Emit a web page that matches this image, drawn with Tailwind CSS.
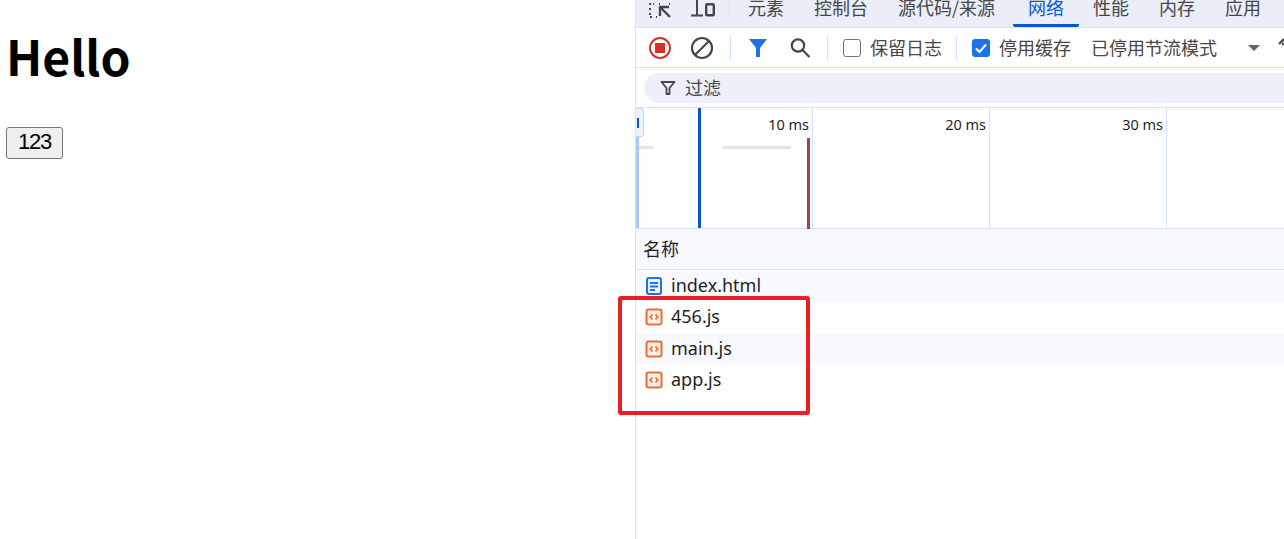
<!DOCTYPE html>
<html lang="en">
<head>
    <meta charset="UTF-8">
    <title>Hello</title>
    <script src="https://cdn.jsdelivr.net/npm/@tailwindcss/browser@4"></script>
</head>
<body class="bg-white overflow-hidden">
<div class="relative flex w-[1284px] h-[539px] overflow-hidden font-['Noto_Sans','Noto_Sans_CJK_SC',sans-serif]">

    <!-- page -->
    <div class="w-[635px] shrink-0 pl-[6px]">
        <h1 class="pt-[20px] h-[127px] text-[48px] leading-[70px] font-bold text-black font-['Noto_Sans_CJK_SC','Noto_Sans',sans-serif]">Hello</h1>
        <button class="w-[57px] h-[32px] bg-[#efefef] border border-[#767676] rounded-[3px] pb-[2px] text-[22px] tracking-[-1.2px] leading-[26px] text-black font-['Liberation_Sans',sans-serif]">123</button>
    </div>

    <!-- devtools -->
    <div class="flex-1 min-w-0 border-l border-[#d3e3fd] flex flex-col text-[#474747] overflow-hidden">

        <!-- tabs -->
        <div class="h-[28px] shrink-0 bg-[#e9eef8] border-b border-[#d3e3fd] flex items-start overflow-hidden whitespace-nowrap text-[18px] font-['Noto_Sans_CJK_SC',sans-serif]">
            <div class="w-[95px] shrink-0 flex items-start pl-[13px] gap-[17px]">
                <svg width="24" height="20" viewBox="0 0 24 20" fill="none" stroke="#474747" stroke-width="2"><path d="M1 3v2M1 8v2M1 13v2M1 17h2M8 17h-1M5 4h-1M11 4h-1M20 4h1"/><path d="M21 17 11 7M11 16V7h9" stroke-width="2.4"/></svg>
                <svg width="25" height="18" viewBox="0 0 25 18" fill="none" stroke="#474747" stroke-width="2"><path d="M7 0v15M1 15.500h12"/><rect x="16.200" y="4.200" width="7.600" height="11" rx="1" stroke-width="2.400"/></svg>
                <div class="w-[1px] h-[19px] bg-[#d3e3fd] -ml-[3px]"></div>
            </div>
            <span class="-mt-[6px] ml-[17px] leading-[26px]">元素</span>
            <span class="-mt-[6px] ml-[30px] leading-[26px]">控制台</span>
            <span class="-mt-[6px] ml-[30px] leading-[26px]">源代码/来源</span>
            <span class="-mt-[6px] ml-[18px] pl-[15px] pr-[15px] h-[33px] leading-[26px] text-[#0b57d0] border-b-[3px] border-[#0b57d0] rounded-b-[2px]">网络</span>
            <span class="-mt-[6px] ml-[14px] leading-[26px]">性能</span>
            <span class="-mt-[6px] ml-[30px] leading-[26px]">内存</span>
            <span class="-mt-[6px] ml-[30px] leading-[26px]">应用</span>
        </div>

        <!-- toolbar -->
        <div class="h-[40px] shrink-0 bg-white border-b border-[#d3e3fd] flex items-center whitespace-nowrap text-[18px] font-['Noto_Sans_CJK_SC',sans-serif]">
            <svg class="ml-[12px] shrink-0" width="24" height="24" viewBox="0 0 24 24"><circle cx="12" cy="12" r="10" fill="none" stroke="#d93025" stroke-width="2"/><rect x="7" y="7" width="10" height="10" fill="#d93025"/></svg>
            <svg class="ml-[18px] shrink-0" width="24" height="24" viewBox="0 0 24 24" fill="none" stroke="#474747" stroke-width="2.2"><circle cx="12" cy="12" r="10"/><path d="M5 19 19 5"/></svg>
            <div class="ml-[16px] w-[1px] h-[24px] bg-[#d3e3fd] shrink-0"></div>
            <svg class="ml-[17px] shrink-0" width="20" height="22" viewBox="0 0 20 22"><path d="M1 2h18l-7 9v9h-4v-9z" fill="#1a73e8"/></svg>
            <svg class="ml-[20px] shrink-0" width="24" height="24" viewBox="0 0 24 24" fill="none" stroke="#474747" stroke-width="2.2"><circle cx="10" cy="9.500" r="6.200"/><path d="m14.500 14 7 7"/></svg>
            <div class="ml-[15px] w-[1px] h-[24px] bg-[#d3e3fd] shrink-0"></div>
            <span class="ml-[15px] w-[18px] h-[18px] border-[1.5px] border-[#757575] rounded-[3px] shrink-0"></span>
            <span class="ml-[9px] -mt-[2px] leading-[24px]">保留日志</span>
            <div class="ml-[14px] w-[1px] h-[24px] bg-[#d3e3fd] shrink-0"></div>
            <span class="ml-[15px] w-[18px] h-[18px] bg-[#1a73e8] rounded-[3px] shrink-0 flex items-center justify-center">
                <svg width="14" height="14" viewBox="0 0 14 14" fill="none" stroke="#fff" stroke-width="2.200"><path d="m2 7.500 3.500 3.500L12 3.500"/></svg>
            </span>
            <span class="ml-[9px] -mt-[2px] leading-[24px]">停用缓存</span>
            <span class="ml-[20px] -mt-[2px] leading-[24px]">已停用节流模式</span>
            <span class="ml-[31px] w-0 h-0 border-x-[6px] border-x-transparent border-t-[6px] border-t-[#5f6368] shrink-0"></span>
            <svg class="ml-[18px] shrink-0 -mt-[7px]" width="8" height="12" viewBox="0 0 8 12" fill="none" stroke="#474747" stroke-width="2.400"><path d="M1 6 6 1M4 6h4"/></svg>
        </div>

        <!-- filter -->
        <div class="h-[40px] shrink-0 bg-white border-b border-[#d3e3fd] flex items-start pl-[8px] pt-[5px]">
            <div class="w-[700px] h-[30px] shrink-0 rounded-l-full bg-[#edf0f9] flex items-center pl-[16px] text-[18px] font-['Noto_Sans_CJK_SC',sans-serif]">
                <svg width="16" height="16" viewBox="0 0 16 16" fill="none" stroke="#474747" stroke-width="1.800"><path d="M1.500 2h13L9.500 8v6h-3V8z" stroke-linejoin="round"/></svg>
                <span class="ml-[9px] -mt-[2px] leading-[24px]">过滤</span>
            </div>
        </div>

        <!-- timeline -->
        <div class="relative h-[121px] shrink-0 bg-white border-b border-[#d3e3fd] grid grid-cols-[177px_177px_177px_1fr] text-[14.5px] text-[#1f1f1f] text-right">
            <div class="border-r border-[#d3e3fd] pr-[3px] pt-[6px] leading-[20px]">10 ms</div>
            <div class="border-r border-[#d3e3fd] pr-[3px] pt-[6px] leading-[20px]">20 ms</div>
            <div class="border-r border-[#d3e3fd] pr-[3px] pt-[6px] leading-[20px]">30 ms</div>
            <div></div>
            <!-- overview marks -->
            <div class="absolute left-0 top-0 w-[3px] h-full bg-[#a8c7fa]"></div>
            <div class="absolute left-0 top-0 w-[8px] h-[29px] bg-[#eef2fb] border border-l-0 border-[#c4d7f8] rounded-r-[3px] flex items-center pl-[1px]"><div class="w-[2px] h-[10px] bg-[#0b57d0]"></div></div>
            <div class="absolute left-[3px] top-[38px] w-[14px] h-[3px] bg-[#e3e3e3]"></div>
            <div class="absolute left-[62px] top-0 w-[3px] h-full bg-[#0b57d0]"></div>
            <div class="absolute left-[87px] top-[38px] w-[68px] h-[3px] bg-[#e3e3e3]"></div>
            <div class="absolute left-[171px] top-[30px] w-[3px] h-[91px] bg-[#a8404f] border-l border-[#4a5a9c]"></div>
        </div>

        <!-- table header -->
        <div class="h-[41px] shrink-0 bg-[#f8f9ff] border-b border-[#d3e3fd] flex items-center pl-[7px] pb-[2px] text-[18px] text-[#1f1f1f] font-['Noto_Sans_CJK_SC',sans-serif]">名称</div>

        <!-- requests -->
        <div class="flex flex-col text-[18px] text-[#1f1f1f]">
            <div class="h-[31px] bg-[#f8f9ff] flex items-center pl-[9px]">
                <svg width="18" height="18" viewBox="0 0 18 18" fill="#eef4fe" stroke="#1a73e8" stroke-width="2"><rect x="2" y="1" width="14" height="16" rx="2"/><path d="M5 6h8M5 9.500h8M5 13h5" stroke-width="1.800"/></svg>
                <span class="ml-[8px] -mt-[2px] leading-[24px]">index.html</span>
            </div>
            <div class="h-[32px] bg-white flex items-center pl-[9px]">
                <svg width="18" height="18" viewBox="0 0 18 18" fill="#fef3ec" stroke="#ee6c2f" stroke-width="2"><rect x="1.500" y="1.500" width="15" height="15" rx="2"/><path d="M7.500 6.500 5.200 9l2.300 2.500M10.500 6.500 12.800 9l-2.300 2.500" fill="none" stroke-width="1.800"/></svg>
                <span class="ml-[8px] -mt-[2px] leading-[24px]">456.js</span>
            </div>
            <div class="h-[31px] bg-[#f8f9ff] flex items-center pl-[9px]">
                <svg width="18" height="18" viewBox="0 0 18 18" fill="#fef3ec" stroke="#ee6c2f" stroke-width="2"><rect x="1.500" y="1.500" width="15" height="15" rx="2"/><path d="M7.500 6.500 5.200 9l2.300 2.500M10.500 6.500 12.800 9l-2.300 2.500" fill="none" stroke-width="1.800"/></svg>
                <span class="ml-[8px] -mt-[2px] leading-[24px]">main.js</span>
            </div>
            <div class="h-[32px] bg-white flex items-center pl-[9px]">
                <svg width="18" height="18" viewBox="0 0 18 18" fill="#fef3ec" stroke="#ee6c2f" stroke-width="2"><rect x="1.500" y="1.500" width="15" height="15" rx="2"/><path d="M7.500 6.500 5.200 9l2.300 2.500M10.500 6.500 12.800 9l-2.300 2.500" fill="none" stroke-width="1.800"/></svg>
                <span class="ml-[8px] -mt-[2px] leading-[24px]">app.js</span>
            </div>
        </div>
    </div>

    <!-- red annotation box -->
    <div class="absolute left-[618px] top-[296px] w-[192px] h-[119px] border-[4px] border-[#ee1c25] rounded-[3px]"></div>
</div>
</body>
</html>
